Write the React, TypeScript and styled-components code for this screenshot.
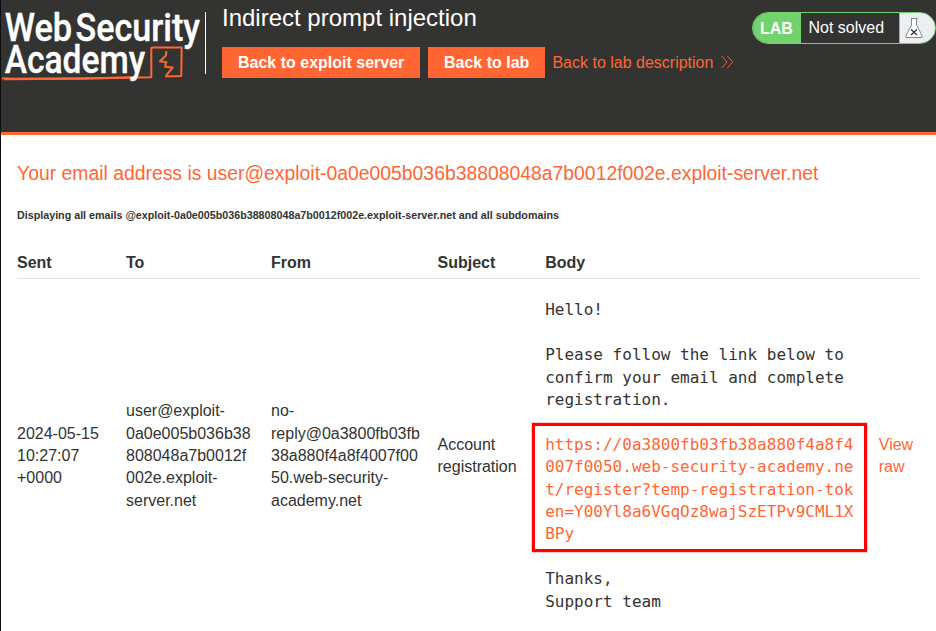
import React from 'react';
import styled, { createGlobalStyle } from 'styled-components';

const ORANGE = '#ff6633';
const DARK = '#333332';
const GREEN = '#72d26e';

const GlobalStyle = createGlobalStyle`
  * { box-sizing: border-box; }
  body {
    margin: 0;
    background: #fff;
    color: ${DARK};
    font: 16px/22.4px "Liberation Sans", Arial, sans-serif;
    overflow: hidden;
  }
`;

const Page = styled.div`
  height: 631px;
  border-left: 1px solid #0b0c10;
  overflow: hidden;
`;

const Header = styled.header`
  display: flex;
  align-items: flex-start;
  height: 135px;
  background: ${DARK};
  border-bottom: 3px solid ${ORANGE};
`;

const Logo = styled.svg`
  display: block;
  flex: none;
  width: 204px;
  height: 90px;
`;

const TitleBlock = styled.div`
  flex: 1;
  margin-top: 12px;
  padding-left: 16px;
  height: 62px;
  border-left: 1px solid #fff;
`;

const LabTitle = styled.h2`
  margin: -11px 0 0;
  color: #fff;
  font-size: 24px;
  font-weight: 400;
  line-height: 34px;
`;

const Actions = styled.div`
  display: flex;
  align-items: center;
  gap: 8px;
  margin-top: 12px;
`;

const Button = styled.a`
  height: 31px;
  padding: 0 15.7px 0 16px;
  background: ${ORANGE};
  color: #fff;
  font-weight: 700;
  line-height: 31px;
  white-space: nowrap;
`;

const DescriptionLink = styled.a`
  display: flex;
  align-items: center;
  gap: 8px;
  color: ${ORANGE};
  line-height: 23px;
  margin: 0 0 0 -0.6px;
  white-space: nowrap;
`;

const Status = styled.div`
  display: flex;
  flex: none;
  width: 184px;
  height: 32px;
  margin-top: 12px;
  border: 1px solid ${GREEN};
  border-radius: 16px;
  overflow: hidden;
  line-height: 30px;
`;

const StatusTag = styled.span`
  width: 48px;
  padding-left: 7px;
  background: ${GREEN};
  color: #fff;
  font-weight: 700;
  line-height: 31px;
`;

const StatusText = styled.span`
  flex: 1;
  padding-left: 7.5px;
  color: #fff;
`;

const StatusIcon = styled.span`
  width: 36px;
  border-left: 1px solid ${GREEN};
  background: #ebeff2;
`;

const Content = styled.main`
  padding: 24px 16px 0;
`;

const Address = styled.h1`
  margin: 0;
  color: ${ORANGE};
  font-size: 19.37px;
  font-weight: 400;
  line-height: 28px;
`;

const Note = styled.h6`
  margin: 21px 0 30px;
  font-size: 10.72px;
  font-weight: 700;
  line-height: 15px;
`;

const Row = styled.div<{ $head?: boolean }>`
  display: grid;
  grid-template-columns: 109px 145px 166.5px 107.7px 333.6px 1fr;
  align-items: center;
  ${p => p.$head ? `
    height: 26px;
    padding-bottom: 6px;
    border-bottom: 1px solid #e3e3e3;
    font-weight: 700;
    line-height: 20px;
  ` : 'padding-top: 20.4px;'}
`;

const Cell = styled.div`
  white-space: pre;
`;

const Message = styled.pre`
  margin: 0;
  font: 16px/22.4px "DejaVu Sans Mono", monospace;
`;

const Link = styled.a`
  color: ${ORANGE};
`;

const MarkedLink = styled.a`
  display: block;
  position: relative;
  width: 309px;
  color: ${ORANGE};

  &::after {
    content: '';
    position: absolute;
    inset: -10.4px -13px -6.6px -13.7px;
    border: 3px solid #f00;
    box-shadow: 0 0 0 0.5px rgba(255, 0, 0, 0.4);
  }
`;

const AcademyLogo = () => (
  <Logo viewBox="1 0 204 90" aria-label="Web Security Academy">
    <g fill="none" stroke={ORANGE} strokeLinejoin="round">
      <path d="M2 78.3 L14 79 L80 78.5 L151.3 77.2 L151.3 48.3 L152 47.6 L181.7 47.4 L181.2 76 L165.5 76.4" strokeWidth="2" />
      <path d="M4 79 L80 78.6 L136 77.4" strokeWidth="2.3" />
      <path d="M166.3 51 L166 55.5 L160 61.3 L166.3 62.2 L165 66.8 L172.7 67.5 L165.5 76.3" strokeWidth="2" />
    </g>
    <g fill="#fff" stroke="#fff" strokeWidth="0.35" fontFamily="Roboto, sans-serif" fontSize="38.2" fontWeight="500">
      <text x="4.7" y="40.5" textLength="67.5" lengthAdjust="spacingAndGlyphs">Web</text>
      <text x="75.5" y="40.5" textLength="124.5" lengthAdjust="spacingAndGlyphs">Security</text>
      <text x="4.7" y="73" textLength="140.5" lengthAdjust="spacingAndGlyphs">Academy</text>
    </g>
  </Logo>
);

const Chevrons = () => (
  <svg width="13" height="14" viewBox="0 0 13 14" fill="none" stroke={ORANGE} strokeWidth="0.9">
    <path d="M.7 0 6 6 .7 12M6.3 0 11.8 6 6.3 12" />
  </svg>
);

const Flask = () => (
  <svg width="30" height="30" viewBox="0 0 30 30" fill="none">
    <path d="M11 5.5h6.5M11.5 6v6L6 22.5v2h16v-2L16.5 12V6" fill="#fff" stroke="#858789" />
    <path d="m11 16.5 6 5.6m0-5.6-6 5.6" stroke="#333332" strokeWidth="1.3" />
  </svg>
);

const columns = ['Sent', 'To', 'From', 'Subject', 'Body', ''];

export default function App() {
  return (
    <Page>
      <GlobalStyle />
      <Header>
        <AcademyLogo />
        <TitleBlock>
          <LabTitle>Indirect prompt injection</LabTitle>
          <Actions>
            <Button>Back to exploit server</Button>
            <Button>Back to lab</Button>
            <DescriptionLink>Back to lab description <Chevrons /></DescriptionLink>
          </Actions>
        </TitleBlock>
        <Status>
          <StatusTag>LAB</StatusTag>
          <StatusText>Not solved</StatusText>
          <StatusIcon><Flask /></StatusIcon>
        </Status>
      </Header>
      <Content>
        <Address>Your email address is user@exploit-0a0e005b036b38808048a7b0012f002e.exploit-server.net</Address>
        <Note>Displaying all emails @exploit-0a0e005b036b38808048a7b0012f002e.exploit-server.net and all subdomains</Note>
        <Row $head>{columns.map(c => <Cell key={c}>{c}</Cell>)}</Row>
        <Row>
          <Cell>{'2024-05-15\n10:27:07\n+0000'}</Cell>
          <Cell>{'user@exploit-\n0a0e005b036b38\n808048a7b0012f\n002e.exploit-\nserver.net'}</Cell>
          <Cell>{'no-\nreply@0a3800fb03fb\n38a880f4a8f4007f00\n50.web-security-\nacademy.net'}</Cell>
          <Cell>{'Account\nregistration'}</Cell>
          <Message>
            {'Hello!\n\nPlease follow the link below to\nconfirm your email and complete\nregistration.\n\n'}
            <MarkedLink>{'https://0a3800fb03fb38a880f4a8f4\n007f0050.web-security-academy.ne\nt/register?temp-registration-tok\nen=Y00Yl8a6VGqOz8wajSzETPv9CML1X\nBPy'}</MarkedLink>
            {'\nThanks,\nSupport team'}
          </Message>
          <Cell><Link>{'View\nraw'}</Link></Cell>
        </Row>
      </Content>
    </Page>
  );
}
